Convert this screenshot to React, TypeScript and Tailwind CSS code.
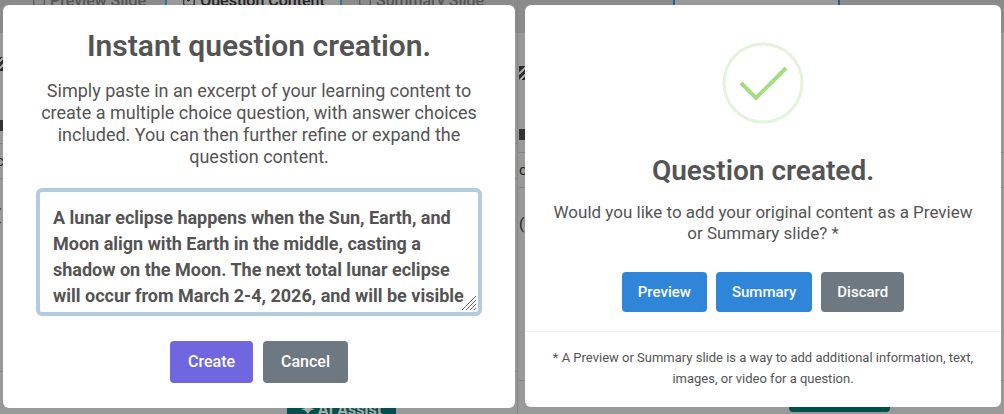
import React from 'react';
import { Square, SquareCheck } from 'lucide-react';

const FONT = "font-['Roboto','Liberation_Sans',sans-serif]";

const EXCERPT =
  'A lunar eclipse happens when the Sun, Earth, and Moon align with Earth in the middle, casting a shadow on the Moon. The next total lunar eclipse will occur from March 2-4, 2026, and will be visible';

interface ModalButtonProps {
  label: string;
  className: string;
}

function ModalButton({ label, className }: ModalButtonProps) {
  return (
    <button type="button" className={`rounded font-medium text-white ${className}`}>
      {label}
    </button>
  );
}

function EditorTabs() {
  return (
    <div className="flex h-[33px] bg-[#8b8b8b] text-[16px] font-medium leading-4 text-[#555]">
      <div className="-mt-[7px] flex w-[165px] items-start justify-end gap-1 pr-[19px]">
        <Square className="h-3.5 w-3.5" />
        <span>Preview Slide</span>
      </div>
      <div className="flex w-[177px] items-start justify-center gap-1 border-x-2 border-[#2f7590] bg-[#999] text-[#222]">
        <SquareCheck className="-mt-[7px] h-3.5 w-3.5" />
        <span className="-mt-[7px]">Question Content</span>
      </div>
      <div className="-mt-[7px] flex items-start gap-1 pl-4">
        <Square className="h-3.5 w-3.5" />
        <span>Summary Slide</span>
      </div>
    </div>
  );
}

// Edge of the editor that stays visible beside each dialog
function EditorEdge({ className }: { className: string }) {
  return (
    <div className={`flex flex-1 flex-col text-[#222] ${className}`}>
      <svg viewBox="0 0 14 14" className="h-3.5 w-3.5">
        <rect width="14" height="14" fill="#2b2b2b" />
        <path d="M0 8 L7 1 M1 14 L14 1" stroke="#aaa" strokeWidth="2" />
      </svg>
      <div className="mt-[49px] h-[11px] w-2 bg-[#333]" />
      <div className="mt-3 flex h-9 items-center border-y border-[#868686] text-[15px]">c</div>
      <div className="mt-[26px] text-[15px] leading-5">(</div>
      <div className="mt-[146px] border-t border-[#868686]" />
    </div>
  );
}

function ResizeGrip() {
  return (
    <svg
      viewBox="0 0 15 15"
      className="pointer-events-none absolute right-[5px] bottom-[5px] h-[15px] w-[15px]"
      stroke="#666"
      strokeWidth="1"
    >
      <path d="M0 14 L14 0 M4 14 L14 4 M8 14 L14 8 M12 14 L14 12" />
    </svg>
  );
}

export default function App() {
  return (
    <main className={`grid grid-cols-[518fr_486fr] bg-[#999] ${FONT} text-[#545454]`}>
      <section className="relative overflow-hidden px-[3px] pt-[5px] pb-[7px]">
        <div className="absolute inset-0 flex flex-col overflow-hidden border-r border-[#858585]" aria-hidden="true">
          <EditorTabs />
          <EditorEdge className="-ml-1 pt-6" />
          <div className="-mb-1.5 ml-[287px] flex h-[22px] w-[109px] shrink-0 items-center justify-center rounded bg-[#00504c] text-[16px] font-bold text-[#aaa]">
            ✦ AI Assist
          </div>
        </div>
        <div className="relative flex flex-col items-center rounded-md bg-white px-[33px] pt-[23px] pb-[25px]">
          <h2 className="text-[30px] font-semibold leading-9">Instant question creation.</h2>
          <p className="mt-4 text-center text-[18px] leading-[22px]">
            Simply paste in an excerpt of your learning content to create a multiple choice question, with answer choices
            included. You can then further refine or expand the question content.
          </p>
          <div className="relative mt-5 flex w-full">
            <textarea
              aria-label="Learning content"
              defaultValue={EXCERPT}
              className="h-[128px] w-full resize-none overflow-hidden rounded-md border-4 border-[#b4cce2] py-[13px] pr-2 pl-[13px] text-[18px] font-bold leading-[26px] outline-none"
            />
            <ResizeGrip />
          </div>
          <div className="mt-[25px] flex gap-[10px]">
            <ModalButton label="Create" className="h-[42px] bg-[#7066e0] px-[18px] text-[16px]" />
            <ModalButton label="Cancel" className="h-[42px] bg-[#6e7881] px-[18px] text-[16px]" />
          </div>
        </div>
      </section>

      <section className="relative overflow-hidden pt-[5px] pr-[3px] pb-[7px] pl-[7px]">
        <div className="absolute inset-0 flex flex-col overflow-hidden" aria-hidden="true">
          <div className="flex h-[33px] bg-[#8b8b8b]">
            <div className="ml-[155px] w-[167px] border-x-2 border-[#2a6080] bg-[#999]" />
          </div>
          <EditorEdge className="ml-px pt-[33px]" />
          <div className="mb-[3px] ml-[271px] h-5 w-[101px] shrink-0 rounded bg-[#00504c]" />
        </div>
        <div className="relative flex flex-col items-center rounded-md bg-white pt-[37px] pb-[18px]">
          <svg viewBox="0 0 82 82" className="h-[82px] w-[82px]" fill="none">
            <circle cx="41" cy="41" r="39" stroke="#e4f3dd" strokeWidth="3" />
            <path d="M19 41 L34 56 L64 26" stroke="#a5dc86" strokeWidth="4" />
          </svg>
          <h2 className="mt-[30px] text-[28px] font-semibold leading-[34px]">Question created.</h2>
          <p className="mt-[14px] px-7 text-center text-[17px] leading-[21px]">
            Would you like to add your original content as a Preview or Summary slide? *
          </p>
          <div className="mt-7 flex gap-[9px]">
            <ModalButton label="Preview" className="h-10 bg-[#2f86d9] px-4 text-[15px]" />
            <ModalButton label="Summary" className="h-10 bg-[#2f86d9] px-4 text-[15px]" />
            <ModalButton label="Discard" className="h-10 bg-[#6e7881] px-4 text-[15px]" />
          </div>
          <p className="mt-[19px] w-full border-t border-[#eee] px-6 pt-[15px] text-center text-[13px] leading-[21px]">
            * A Preview or Summary slide is a way to add additional information, text, images, or video for a question.
          </p>
        </div>
      </section>
    </main>
  );
}
